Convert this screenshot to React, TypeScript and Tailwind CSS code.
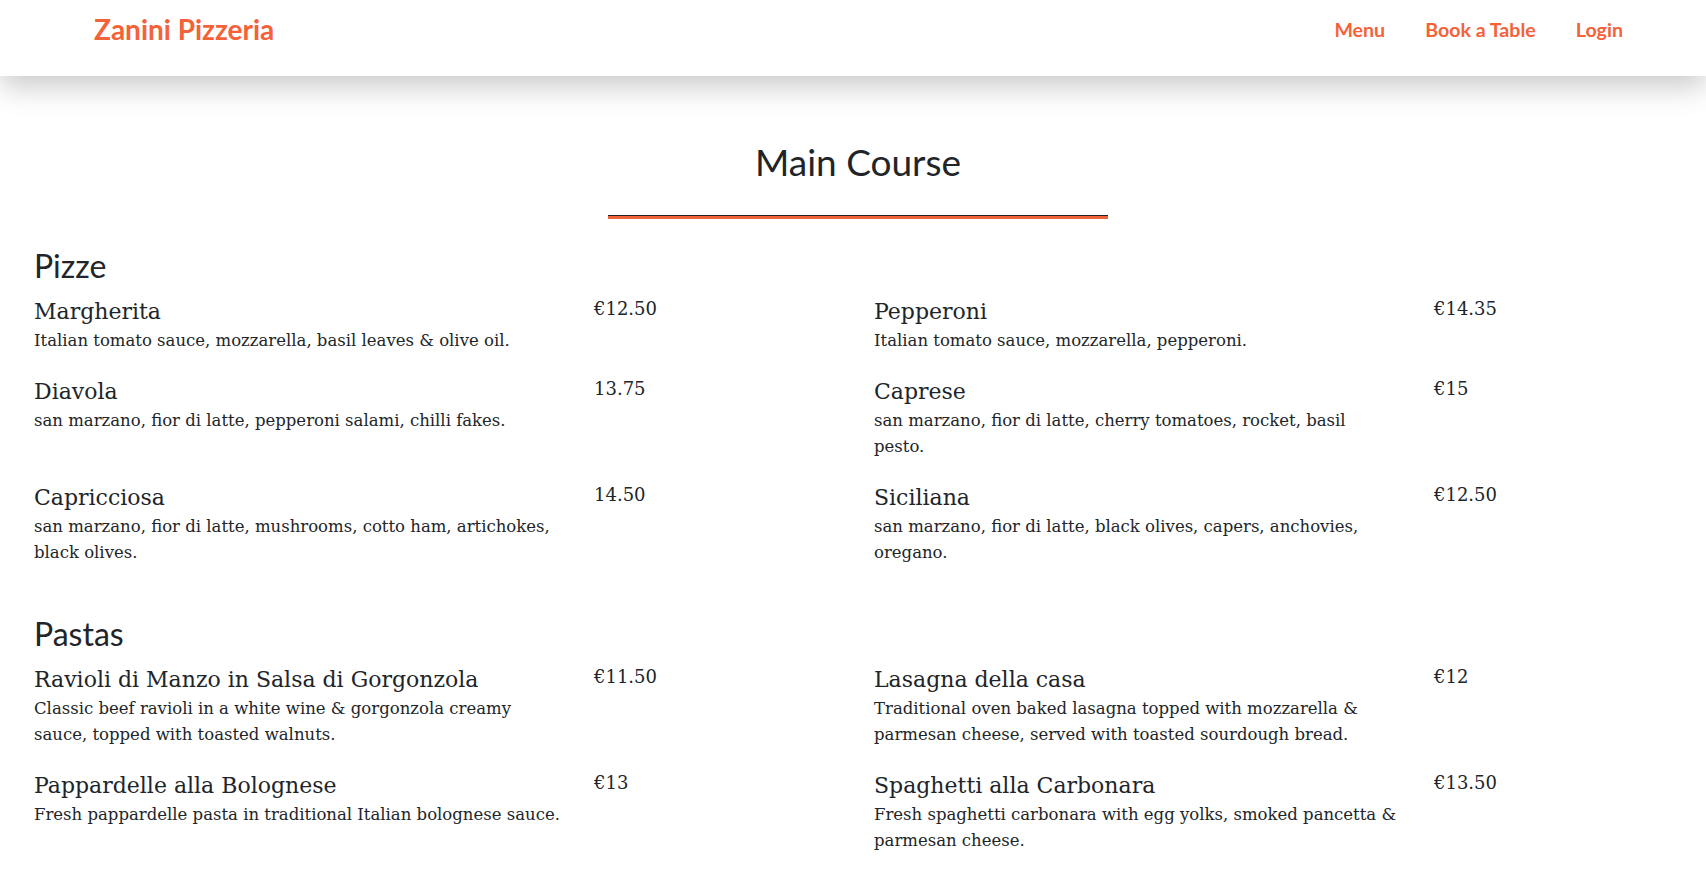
type Dish = {
  name: string;
  price: string;
  description: string;
};

type Section = {
  title: string;
  dishes: Dish[];
};

const sections: Section[] = [
  {
    title: "Pizze",
    dishes: [
      { name: "Margherita", price: "€12.50", description: "Italian tomato sauce, mozzarella, basil leaves & olive oil." },
      { name: "Pepperoni", price: "€14.35", description: "Italian tomato sauce, mozzarella, pepperoni." },
      { name: "Diavola", price: "13.75", description: "san marzano, fior di latte, pepperoni salami, chilli fakes." },
      { name: "Caprese", price: "€15", description: "san marzano, fior di latte, cherry tomatoes, rocket, basil\npesto." },
      { name: "Capricciosa", price: "14.50", description: "san marzano, fior di latte, mushrooms, cotto ham, artichokes, black olives." },
      { name: "Siciliana", price: "€12.50", description: "san marzano, fior di latte, black olives, capers, anchovies, oregano." },
    ],
  },
  {
    title: "Pastas",
    dishes: [
      {
        name: "Ravioli di Manzo in Salsa di Gorgonzola",
        price: "€11.50",
        description: "Classic beef ravioli in a white wine & gorgonzola creamy sauce, topped with toasted walnuts.",
      },
      {
        name: "Lasagna della casa",
        price: "€12",
        description: "Traditional oven baked lasagna topped with mozzarella & parmesan cheese, served with toasted sourdough bread.",
      },
      {
        name: "Pappardelle alla Bolognese",
        price: "€13",
        description: "Fresh pappardelle pasta in traditional Italian bolognese sauce.",
      },
      {
        name: "Spaghetti alla Carbonara",
        price: "€13.50",
        description: "Fresh spaghetti carbonara with egg yolks, smoked pancetta & parmesan cheese.",
      },
    ],
  },
];

function Navbar() {
  return (
    <header className="relative z-10 flex h-[76px] items-start justify-between bg-white pl-[94px] pr-[83px] pt-[13px] shadow-[0_10px_30px_rgba(0,0,0,0.22)] font-['Lato',sans-serif]">
      <a href="#" className="text-[28px] font-bold leading-[32px] text-[#f4623a]">
        Zanini Pizzeria
      </a>
      <nav className="mt-[5px] flex items-center gap-[40px] text-[19.6px] font-bold leading-[24px] text-[#f4623a]">
        <a href="#">Menu</a>
        <a href="#">Book a Table</a>
        <a href="#">Login</a>
      </nav>
    </header>
  );
}

function DishItem({ dish }: { dish: Dish }) {
  return (
    <div className="flex items-start">
      <div className="w-[530px]">
        <h4 className="text-[22px] leading-[33px]">{dish.name}</h4>
        <p className="whitespace-pre-line text-[16.5px] leading-[26px]">{dish.description}</p>
      </div>
      <div className="ml-[30px] text-[18px] leading-[28px]">{dish.price}</div>
    </div>
  );
}

export default function App() {
  return (
    <div className="min-h-screen bg-white text-[#212529]">
      <Navbar />

      <main className="pl-[34px] pr-[24px] pb-10 pt-[64px]">
        <h1 className="text-center font-['Lato',sans-serif] text-[37px] leading-[44px]">Main Course</h1>
        <div className="mx-auto mt-[31px] h-[4px] w-[500px] border-t border-[#222] bg-[#f4623a]" />

        {sections.map((section, i) => (
          <section key={section.title} className={i === 0 ? "mt-[28px]" : "mt-[49px]"}>
            <h2 className="mb-[10px] font-['Lato',sans-serif] text-[32px] leading-[38px]">{section.title}</h2>
            <div className="grid grid-cols-[840px_1fr] gap-y-[21px] font-['DejaVu_Serif',serif]">
              {section.dishes.map((dish) => (
                <DishItem key={dish.name} dish={dish} />
              ))}
            </div>
          </section>
        ))}
      </main>
    </div>
  );
}
